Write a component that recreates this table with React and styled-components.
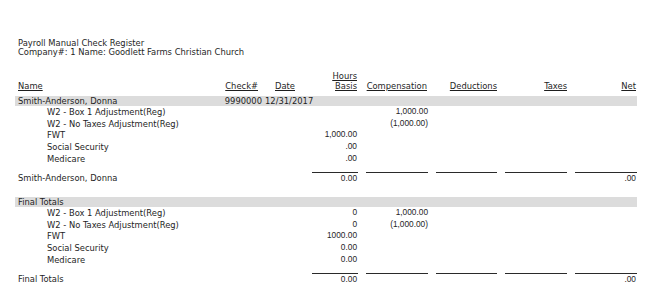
import React from 'react'
import styled, { createGlobalStyle } from 'styled-components'

const GlobalStyle = createGlobalStyle`
  body {
    margin: 0;
    background: #fff;
  }
`

const COLS = '200px 47px 50px 46px 70px 69px 70px 70px'

const sections = [
  {
    name: 'Smith-Anderson, Donna',
    check: '9990000',
    date: '12/31/2017',
    lines: [
      { label: 'W2 - Box 1 Adjustment(Reg)', hours: '', comp: '1,000.00' },
      { label: 'W2 - No Taxes Adjustment(Reg)', hours: '', comp: '(1,000.00)' },
      { label: 'FWT', hours: '1,000.00', comp: '' },
      { label: 'Social Security', hours: '.00', comp: '' },
      { label: 'Medicare', hours: '.00', comp: '' },
    ],
    total: { hours: '0.00', net: '.00' },
  },
  {
    name: 'Final Totals',
    check: '',
    date: '',
    lines: [
      { label: 'W2 - Box 1 Adjustment(Reg)', hours: '0', comp: '1,000.00' },
      { label: 'W2 - No Taxes Adjustment(Reg)', hours: '0', comp: '(1,000.00)' },
      { label: 'FWT', hours: '1000.00', comp: '' },
      { label: 'Social Security', hours: '0.00', comp: '' },
      { label: 'Medicare', hours: '0.00', comp: '' },
    ],
    total: { hours: '0.00', net: '.00' },
  },
]

export default function App() {
  return (
    <>
      <GlobalStyle />
      <Page>
        <Title>
          <div>Payroll Manual Check Register</div>
          <div>Company#: 1 Name: Goodlett Farms Christian Church</div>
        </Title>

        <HeaderRow>
          <HeadCell>Name</HeadCell>
          <HeadCell align="right" pad="0 4px 0 0">Check#</HeadCell>
          <HeadCell pad="0 0 0 13px">Date</HeadCell>
          <HeadCell align="right" pad="0 1px 0 0">
            <span>Hours</span>
            <span>Basis</span>
          </HeadCell>
          <HeadCell align="right" pad="0 1px 0 0">Compensation</HeadCell>
          <HeadCell align="right">Deductions</HeadCell>
          <HeadCell align="right">Taxes</HeadCell>
          <HeadCell align="right" pad="0 1px 0 0">Net</HeadCell>
        </HeaderRow>

        {sections.map((s, i) => (
          <Section key={i}>
            <Band>
              <Label>{s.name}</Label>
              <CheckCell>{s.check}</CheckCell>
              <DateCell>{s.date}</DateCell>
            </Band>
            {s.lines.map((l, j) => (
              <DetailRow key={j}>
                <Label indent>{l.label}</Label>
                <span />
                <span />
                <Num pad="1px">{l.hours}</Num>
                <Num>{l.comp}</Num>
              </DetailRow>
            ))}
            <TotalRow>
              <Label>{s.name}</Label>
              <span />
              <span />
              <RuleCell>{s.total.hours}</RuleCell>
              <RuleCell inset />
              <RuleCell inset />
              <RuleCell inset />
              <RuleCell inset>{s.total.net}</RuleCell>
            </TotalRow>
          </Section>
        ))}
      </Page>
    </>
  )
}

const Page = styled.div`
  width: 622px;
  padding: 37.7px 0 0 15px;
  font-family: "DejaVu Sans Condensed", "DejaVu Sans", sans-serif;
  font-size: 9.3px;
  color: #1e1e1e;
`

const Title = styled.div`
  padding-left: 3px;
  line-height: 9.5px;
`

const Row = styled.div`
  display: grid;
  grid-template-columns: ${COLS};
  white-space: nowrap;
`

const HeaderRow = styled(Row)`
  margin-top: 14px;
  line-height: 10px;
`

const HeadCell = styled.div`
  display: flex;
  flex-direction: column;
  justify-content: flex-end;
  align-items: ${p => (p.align === 'right' ? 'flex-end' : 'flex-start')};
  padding: ${p => p.pad || '0'};
  text-decoration: underline;
  &:first-child {
    padding-left: 3px;
  }
  span {
    text-decoration: underline;
  }
`

const Section = styled.div`
  margin-top: 5.3px;
  & + & {
    margin-top: 13px;
  }
`

const Band = styled(Row)`
  height: 10px;
  line-height: 10px;
  background: #dcdcdc;
`

const DetailRow = styled(Row)`
  height: 11.75px;
  line-height: 11.75px;
`

const TotalRow = styled(Row)`
  margin-top: 7.25px;
  line-height: 11px;
`

const Label = styled.div`
  padding-left: ${p => (p.indent ? '32px' : '3px')};
`

const CheckCell = styled.div`
  text-align: right;
`

const DateCell = styled.div`
  padding-left: 3px;
`

const Num = styled.div`
  text-align: right;
  font-family: "Liberation Sans", Arial, sans-serif;
  font-size: 8.3px;
  padding-right: ${p => p.pad || '0'};
`

const RuleCell = styled.div`
  margin-left: ${p => (p.inset ? '8px' : '0')};
  border-top: 1px solid #2a2a2a;
  text-align: right;
  padding-right: 1px;
  font-family: "Liberation Sans", Arial, sans-serif;
  font-size: 8.3px;
`
